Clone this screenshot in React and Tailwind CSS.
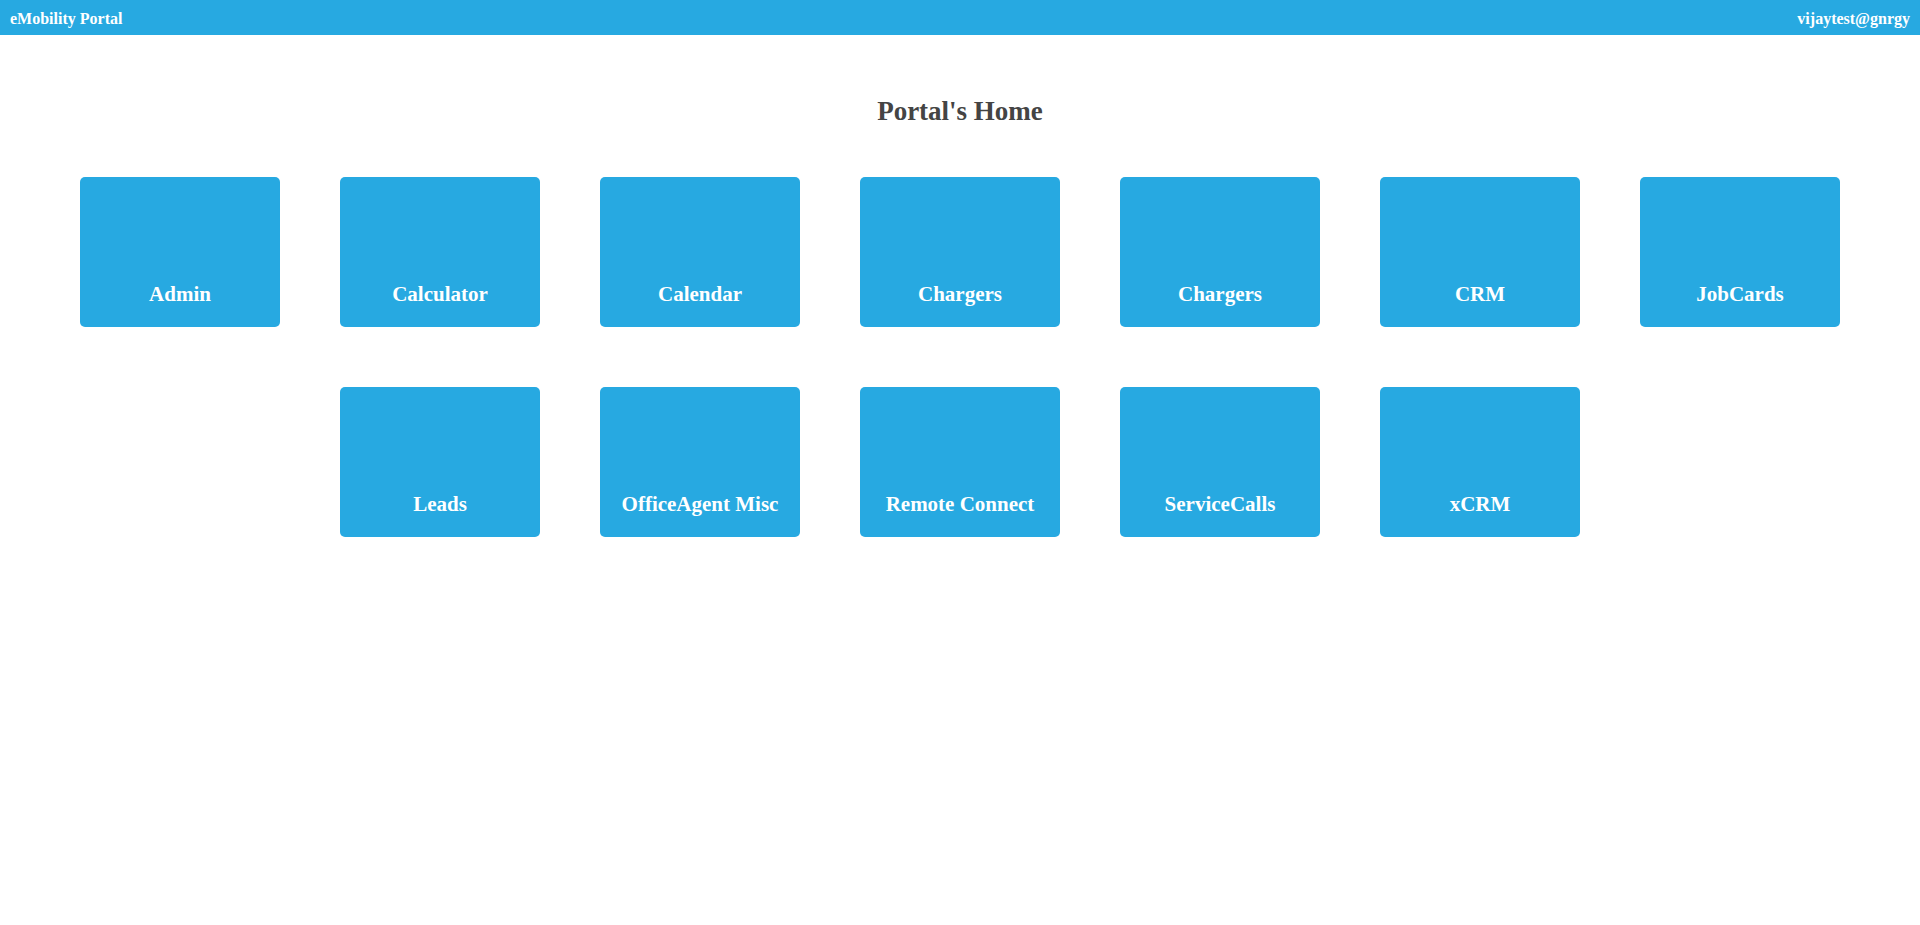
import React from "react";

const row1 = ["Admin", "Calculator", "Calendar", "Chargers", "Chargers", "CRM", "JobCards"];
const row2 = ["Leads", "OfficeAgent Misc", "Remote Connect", "ServiceCalls", "xCRM"];

function Card({ label }) {
  return (
    <div className="w-[200px] h-[150px] bg-[#27a9e1] rounded-[5px] flex flex-col justify-end items-center pb-[21px] cursor-pointer">
      <span className="text-white font-bold text-[21px] leading-[24px] text-center whitespace-nowrap">{label}</span>
    </div>
  );
}

export default function App() {
  return (
    <div className="min-h-[925px] bg-white" style={{ fontFamily: '"Liberation Serif", "Times New Roman", serif' }}>
      <header className="h-[35px] bg-[#27a9e1] flex justify-between px-[10px] pt-[10px] text-white font-bold text-[16px] leading-[18px]">
        <span>eMobility Portal</span>
        <span>vijaytest@gnrgy</span>
      </header>
      <h1 className="mt-[61px] text-center text-[27px] leading-[30px] font-bold text-[#444]">Portal's Home</h1>
      <div className="mt-[51px] flex flex-col items-center gap-[60px]">
        <div className="flex gap-[60px] justify-center">
          {row1.map((l, i) => <Card key={i} label={l} />)}
        </div>
        <div className="flex gap-[60px] justify-center">
          {row2.map((l, i) => <Card key={i} label={l} />)}
        </div>
      </div>
    </div>
  );
}
